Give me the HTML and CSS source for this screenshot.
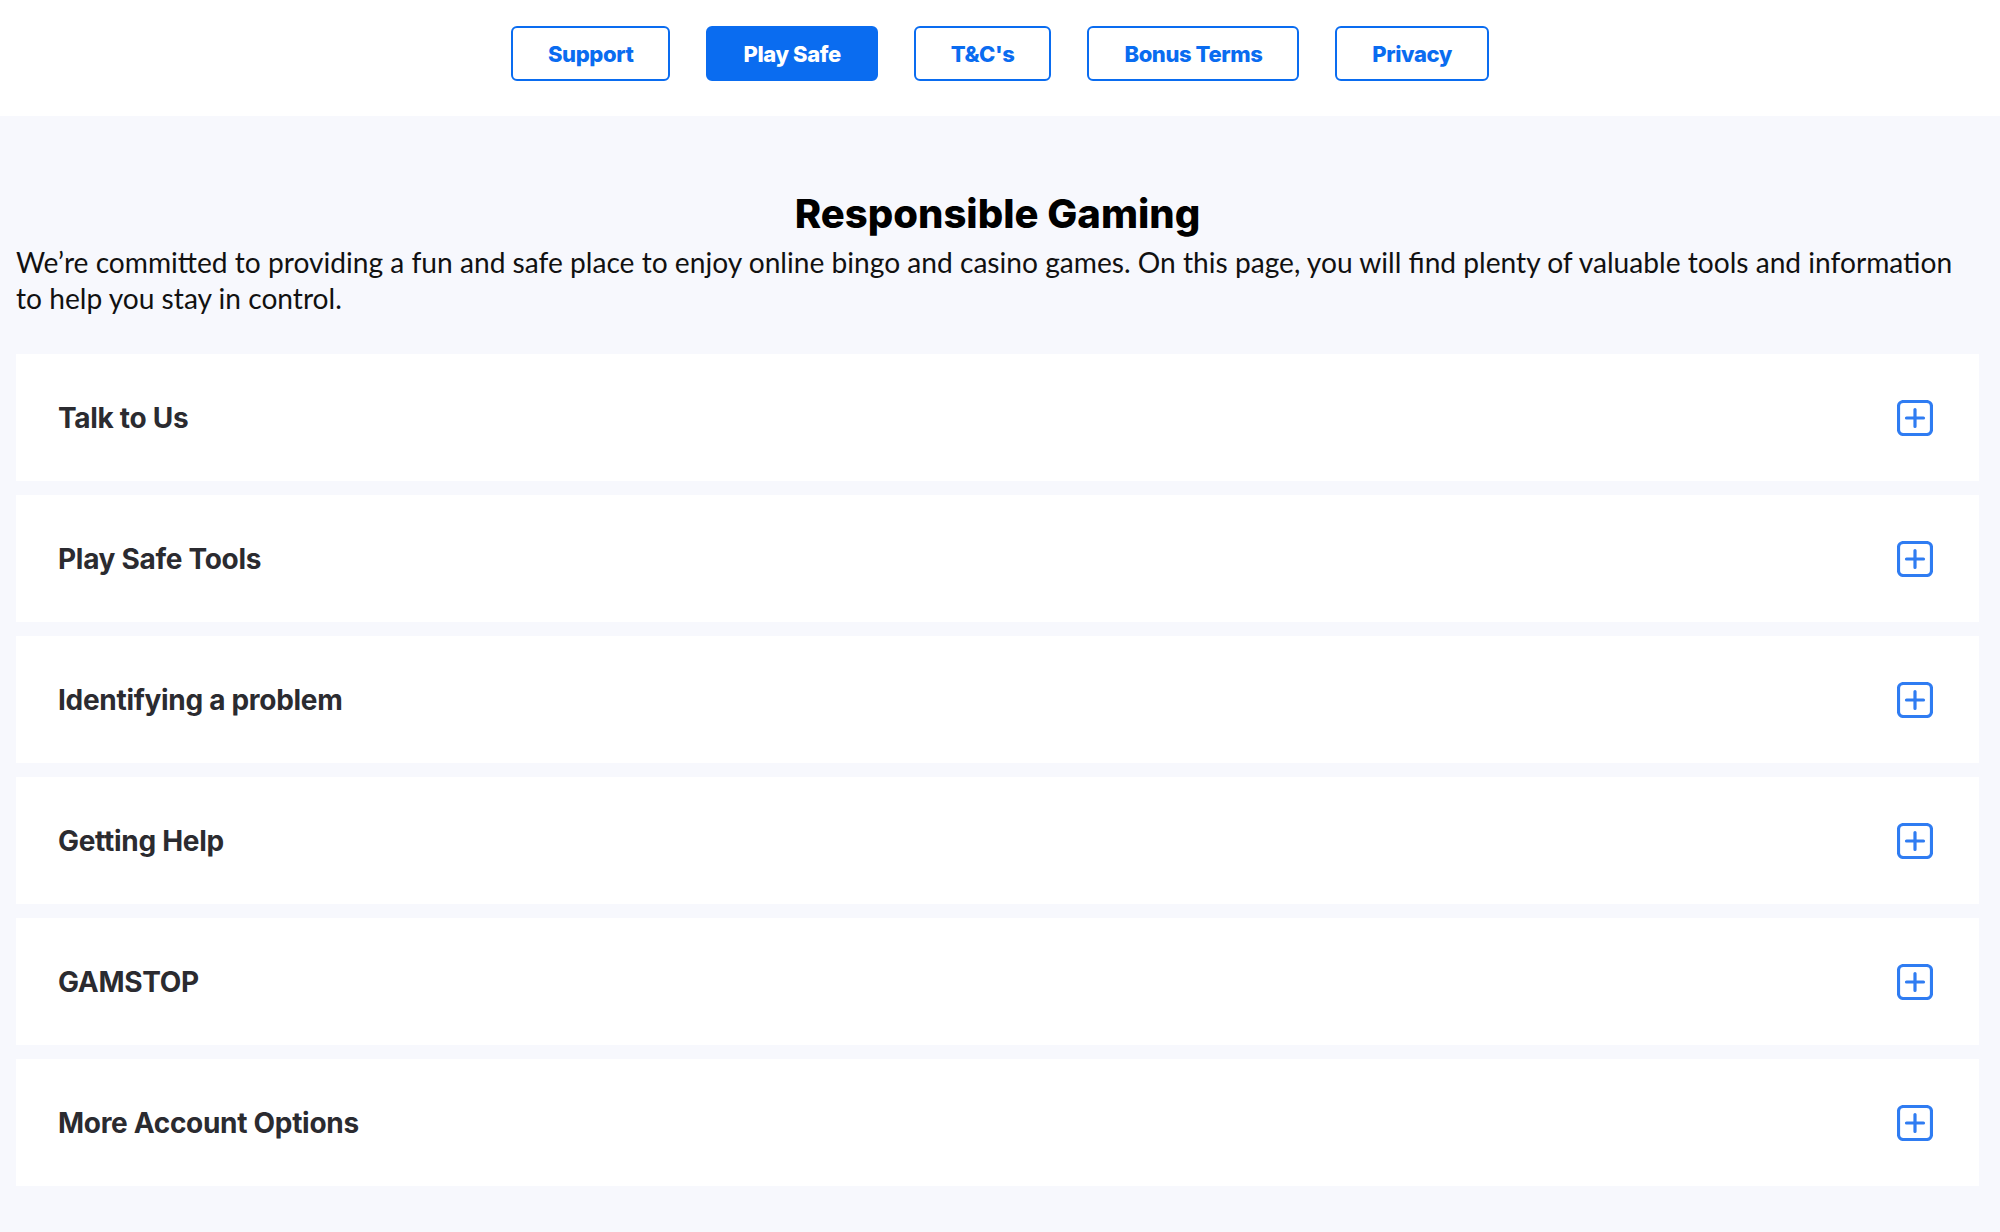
FILE: index.html
```html
<!DOCTYPE html>
<html lang="en">
<head>
<meta charset="utf-8">
<title>Responsible Gaming</title>
<link rel="stylesheet" href="styles.css">
</head>
<body>
<header class="topnav">
  <nav class="tabs">
    <a class="tab" href="#">Support</a>
    <a class="tab tab--active" href="#">Play Safe</a>
    <a class="tab" href="#">T&amp;C's</a>
    <a class="tab" href="#">Bonus Terms</a>
    <a class="tab" href="#">Privacy</a>
  </nav>
</header>
<main class="page">
  <h1 class="page-title">Responsible Gaming</h1>
  <p class="intro">We’re committed to providing a fun and safe place to enjoy online bingo and casino games. On this page, you will find plenty of valuable tools and information to help you stay in control.</p>
  <section class="accordion">
    <div class="panel"><span class="panel-title">Talk to Us</span><svg class="plus" viewBox="0 0 36 36"><rect x="1.5" y="1.5" width="33" height="33" rx="5"/><path d="M9.5 18h17M18 9.5v17"/></svg></div>
    <div class="panel"><span class="panel-title">Play Safe Tools</span><svg class="plus" viewBox="0 0 36 36"><rect x="1.5" y="1.5" width="33" height="33" rx="5"/><path d="M9.5 18h17M18 9.5v17"/></svg></div>
    <div class="panel"><span class="panel-title">Identifying a problem</span><svg class="plus" viewBox="0 0 36 36"><rect x="1.5" y="1.5" width="33" height="33" rx="5"/><path d="M9.5 18h17M18 9.5v17"/></svg></div>
    <div class="panel"><span class="panel-title">Getting Help</span><svg class="plus" viewBox="0 0 36 36"><rect x="1.5" y="1.5" width="33" height="33" rx="5"/><path d="M9.5 18h17M18 9.5v17"/></svg></div>
    <div class="panel"><span class="panel-title">GAMSTOP</span><svg class="plus" viewBox="0 0 36 36"><rect x="1.5" y="1.5" width="33" height="33" rx="5"/><path d="M9.5 18h17M18 9.5v17"/></svg></div>
    <div class="panel"><span class="panel-title">More Account Options</span><svg class="plus" viewBox="0 0 36 36"><rect x="1.5" y="1.5" width="33" height="33" rx="5"/><path d="M9.5 18h17M18 9.5v17"/></svg></div>
  </section>
</main>
</body>
</html>
```

FILE: styles.css
```css
* { box-sizing: border-box; }

html, body {
  margin: 0;
  padding: 0;
}

body {
  font-family: Lato, "Noto Sans", sans-serif;
  background: #f7f8fd;
  color: #111;
  min-height: 1232px;
}

/* top tab bar */
.topnav {
  background: #ffffff;
  height: 116px;
  display: flex;
  justify-content: center;
  padding-top: 26px;
}

.tabs {
  display: flex;
  gap: 36px;
  height: 55px;
}

.tab {
  display: flex;
  align-items: center;
  justify-content: center;
  padding: 0 35px;
  border: 2px solid #0a6cf0;
  border-radius: 6px;
  color: #0a6cf0;
  font-family: Inter, Lato, sans-serif;
  font-weight: 800;
  font-size: 22px;
  text-decoration: none;
  letter-spacing: -0.4px;
}

.tab--active {
  background: #0a6cf0;
  color: #ffffff;
}

/* main content */
.page {
  padding: 74px 21px 44px 16px;
}

.page-title {
  margin: 0;
  text-align: center;
  font-family: Inter, Lato, sans-serif;
  font-size: 40px;
  line-height: 48px;
  font-weight: 800;
  letter-spacing: 0;
  color: #000;
}

.intro {
  margin: 6px 0 38px;
  padding-right: 10px;
  font-size: 28.15px;
  line-height: 36px;
  color: #111;
}

.accordion {
  display: flex;
  flex-direction: column;
  gap: 14px;
}

.panel {
  background: #ffffff;
  height: 127px;
  display: flex;
  align-items: center;
  justify-content: space-between;
  padding: 0 46px 0 42px;
}

.panel-title {
  font-family: Inter, Lato, sans-serif;
  font-size: 28px;
  font-weight: 700;
  letter-spacing: -0.3px;
  color: #2b2b30;
}

.plus {
  width: 36px;
  height: 36px;
  fill: none;
  stroke: #2f7cf2;
  stroke-width: 3.2;
  stroke-linecap: round;
}
```
